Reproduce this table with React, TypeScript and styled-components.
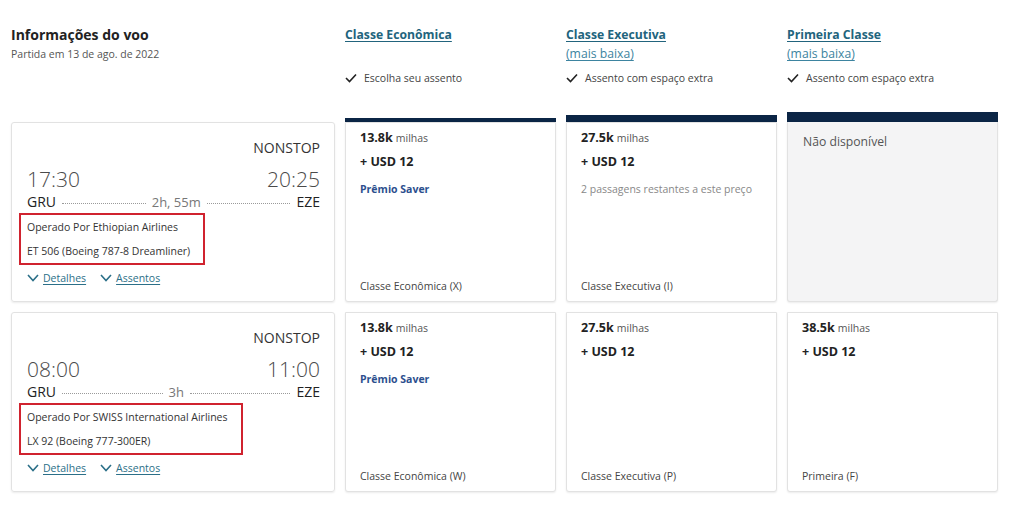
import React from "react";
import styled, { createGlobalStyle } from "styled-components";

const Global = createGlobalStyle`
  html, body { margin: 0; padding: 0; background: #fff; }
  body { font-family: "Open Sans", "Noto Sans", Arial, sans-serif; color: #222; }
  * { box-sizing: border-box; }
`;

const Page = styled.div`
  width: 1024px;
  height: 509px;
  padding: 25px 0 0 11px;
  display: grid;
  grid-template-columns: 324px 211px 211px 211px;
  column-gap: 10px;
  grid-template-rows: 77px 190px 180px;
  row-gap: 10px;
  align-items: end;
`;

const HeaderCell = styled.div`
  align-self: start;
`;

const Title = styled.h1`
  margin: 0;
  font-size: 14px;
  line-height: 20px;
  font-weight: 700;
  color: #222;
`;

const Subtitle = styled.div`
  margin-top: 1px;
  font-size: 10.5px;
  line-height: 16px;
  color: #555;
`;

const ClassLink = styled.a`
  display: block;
  font-size: 12.2px;
  line-height: 20px;
  font-weight: 700;
  color: #22647d;
  text-decoration: underline;
  text-underline-offset: 2px;
`;

const Lowest = styled.a`
  display: block;
  font-size: 12.2px;
  line-height: 18px;
  color: #3d84a0;
  text-decoration: underline;
  text-underline-offset: 2px;
  min-height: 18px;
`;

const Feature = styled.div`
  margin-top: 7px;
  display: flex;
  align-items: center;
  gap: 7px;
  font-size: 10.5px;
  line-height: 16px;
  color: #444;
`;

const FlightCard = styled.div`
  height: 180px;
  border: 1px solid #e2e2e2;
  border-radius: 3px;
  box-shadow: 0 1px 2px rgba(0, 0, 0, 0.08);
  padding: 15px 14px 0 15px;
  display: flex;
  flex-direction: column;
`;

const Nonstop = styled.div`
  text-align: right;
  font-size: 14px;
  line-height: 20px;
  color: #333;
`;

const Times = styled.div`
  margin-top: 7px;
  display: flex;
  justify-content: space-between;
  font-size: 21px;
  line-height: 28px;
  font-weight: 300;
  color: #4a4a4a;
`;

const Route = styled.div`
  display: flex;
  align-items: center;
  gap: 6px;
  font-size: 14px;
  line-height: 18px;
  color: #222;
`;

const Dots = styled.span`
  flex: 1;
  border-top: 1px dotted #9a9a9a;
  margin-top: 2px;
`;

const Duration = styled.span`
  font-size: 13px;
  color: #777;
`;

const OperatorBox = styled.div`
  align-self: flex-start;
  margin: 2px 0 0 -8px;
  border: 2px solid #d0232f;
  padding: 0 13px 0 6px;
  font-size: 10.5px;
  line-height: 24px;
  color: #333;
`;

const Links = styled.div`
  margin-top: 4px;
  display: flex;
  gap: 14px;
  font-size: 10.5px;
  line-height: 18px;
`;

const ToggleLink = styled.a`
  display: flex;
  align-items: center;
  gap: 4px;
  color: #2b6f88;
  span { text-decoration: underline; text-underline-offset: 2px; }
`;

const FareCell = styled.div`
  display: flex;
  flex-direction: column;
`;

const Bar = styled.div<{ $h: number }>`
  height: ${(p) => p.$h}px;
  background: #0b2545;
`;

const FareCard = styled.div<{ $disabled?: boolean }>`
  height: 180px;
  border: 1px solid #e2e2e2;
  border-top: ${(p) => (p.$disabled ? "none" : "1px solid #e2e2e2")};
  border-radius: 0 0 3px 3px;
  background: ${(p) => (p.$disabled ? "#f4f4f5" : "#fff")};
  box-shadow: 0 1px 2px rgba(0, 0, 0, 0.08);
  padding: 5px 14px 6px 14px;
  display: flex;
  flex-direction: column;
`;

const Miles = styled.div`
  font-size: 12.5px;
  line-height: 20px;
  font-weight: 700;
  color: #222;
  small { font-size: 10.5px; font-weight: 400; color: #555; margin-left: 3px; }
`;

const Usd = styled.div`
  margin-top: 4px;
  font-size: 12.5px;
  line-height: 20px;
  font-weight: 700;
  color: #222;
`;

const Saver = styled.div`
  margin-top: 7px;
  font-size: 10.5px;
  line-height: 20px;
  font-weight: 700;
  color: #2c4f8e;
`;

const Remaining = styled.div`
  margin-top: 7px;
  font-size: 10.5px;
  line-height: 20px;
  color: #888;
`;

const FareClass = styled.div`
  margin-top: auto;
  font-size: 10.5px;
  line-height: 18px;
  color: #444;
`;

const Unavailable = styled.div`
  margin-top: 5px;
  padding-left: 1px;
  font-size: 12.2px;
  line-height: 20px;
  color: #555;
`;

const Check = () => (
  <svg width="12" height="10" viewBox="0 0 12 10">
    <polyline points="1,5 4.5,8.5 11,1.5" fill="none" stroke="#222" strokeWidth="1.6" />
  </svg>
);

const Chevron = () => (
  <svg width="12" height="8" viewBox="0 0 12 8">
    <polyline points="1,1 6,6.5 11,1" fill="none" stroke="#2b6f88" strokeWidth="1.6" />
  </svg>
);

type Fare = {
  miles?: string;
  saver?: boolean;
  remaining?: string;
  cls?: string;
  unavailable?: boolean;
};

type Flight = {
  dep: string;
  arr: string;
  dur: string;
  operator: string;
  equip: string;
  fares: Fare[];
};

const flights: Flight[] = [
  {
    dep: "17:30",
    arr: "20:25",
    dur: "2h, 55m",
    operator: "Operado Por Ethiopian Airlines",
    equip: "ET 506 (Boeing 787-8 Dreamliner)",
    fares: [
      { miles: "13.8k", saver: true, cls: "Classe Econômica (X)" },
      { miles: "27.5k", remaining: "2 passagens restantes a este preço", cls: "Classe Executiva (I)" },
      { unavailable: true },
    ],
  },
  {
    dep: "08:00",
    arr: "11:00",
    dur: "3h",
    operator: "Operado Por SWISS International Airlines",
    equip: "LX 92 (Boeing 777-300ER)",
    fares: [
      { miles: "13.8k", saver: true, cls: "Classe Econômica (W)" },
      { miles: "27.5k", cls: "Classe Executiva (P)" },
      { miles: "38.5k", cls: "Primeira (F)" },
    ],
  },
];

const headers = [
  { name: "Classe Econômica", lowest: false, feature: "Escolha seu assento" },
  { name: "Classe Executiva", lowest: true, feature: "Assento com espaço extra" },
  { name: "Primeira Classe", lowest: true, feature: "Assento com espaço extra" },
];

const barHeights = [4, 7, 10];

export default function App() {
  return (
    <>
      <Global />
      <Page>
        <HeaderCell>
          <Title>Informações do voo</Title>
          <Subtitle>Partida em 13 de ago. de 2022</Subtitle>
        </HeaderCell>
        {headers.map((h) => (
          <HeaderCell key={h.name}>
            <ClassLink>{h.name}</ClassLink>
            <Lowest>{h.lowest ? "(mais baixa)" : ""}</Lowest>
            <Feature>
              <Check />
              {h.feature}
            </Feature>
          </HeaderCell>
        ))}

        {flights.map((f, fi) => (
          <React.Fragment key={f.dep}>
            <FlightCard>
              <Nonstop>NONSTOP</Nonstop>
              <Times>
                <span>{f.dep}</span>
                <span>{f.arr}</span>
              </Times>
              <Route>
                <span>GRU</span>
                <Dots />
                <Duration>{f.dur}</Duration>
                <Dots />
                <span>EZE</span>
              </Route>
              <OperatorBox>
                <div>{f.operator}</div>
                <div>{f.equip}</div>
              </OperatorBox>
              <Links>
                <ToggleLink>
                  <Chevron />
                  <span>Detalhes</span>
                </ToggleLink>
                <ToggleLink>
                  <Chevron />
                  <span>Assentos</span>
                </ToggleLink>
              </Links>
            </FlightCard>
            {f.fares.map((fare, i) => (
              <FareCell key={i}>
                {fi === 0 && <Bar $h={barHeights[i]} />}
                <FareCard $disabled={fare.unavailable}>
                  {fare.unavailable ? (
                    <Unavailable>Não disponível</Unavailable>
                  ) : (
                    <>
                      <Miles>
                        {fare.miles}
                        <small>milhas</small>
                      </Miles>
                      <Usd>+ USD 12</Usd>
                      {fare.saver && <Saver>Prêmio Saver</Saver>}
                      {fare.remaining && <Remaining>{fare.remaining}</Remaining>}
                      <FareClass>{fare.cls}</FareClass>
                    </>
                  )}
                </FareCard>
              </FareCell>
            ))}
          </React.Fragment>
        ))}
      </Page>
    </>
  );
}
